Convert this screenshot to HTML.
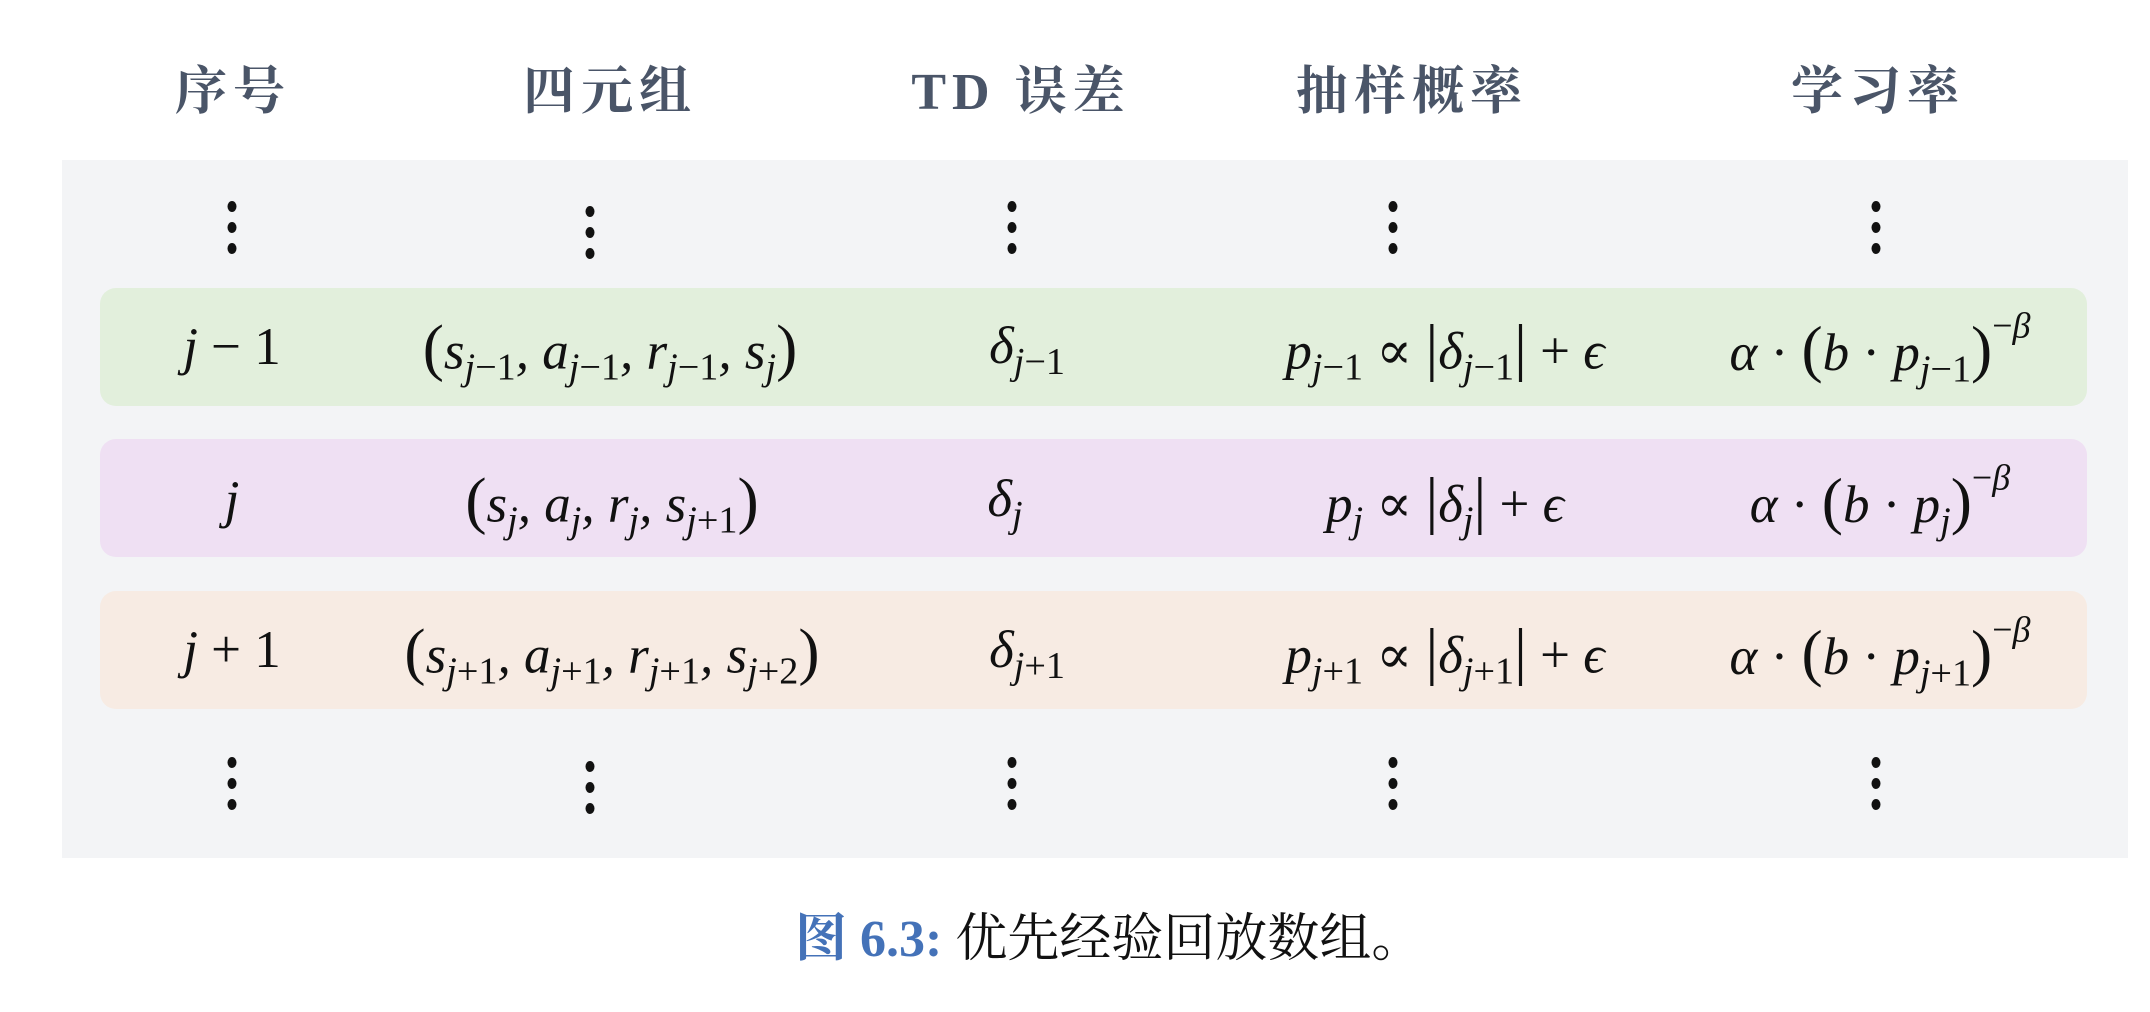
<!DOCTYPE html>
<html><head><meta charset="utf-8">
<style>
html,body{margin:0;padding:0;background:#fff;}
body{width:2150px;height:1012px;position:relative;overflow:hidden;}
.h{position:absolute;top:58px;transform:translateX(-50%);font-family:"Liberation Serif","Noto Serif CJK SC",serif;font-weight:bold;font-size:52px;color:#4a5568;white-space:nowrap;letter-spacing:6px;line-height:70px;}
.panel{position:absolute;left:62px;top:160px;width:2066px;height:698px;background:#f3f4f6;}
.row{position:absolute;left:100px;width:1987px;height:118px;border-radius:16px;}
.c{position:absolute;transform:translate(-50%,-50%);font-family:"Liberation Serif","DejaVu Serif",serif;font-style:italic;font-size:53px;color:#111;white-space:nowrap;}
.c sub{font-size:0.72em;vertical-align:-0.3em;}
.c sup{font-size:0.68em;vertical-align:0.9em;}
.n{font-style:normal;}
.p{font-style:normal;font-size:1.2em;font-weight:300;}
.dots{position:absolute;width:9px;height:52px;transform:translate(-50%,-50%);}
.dots i{display:block;width:9px;height:11px;border-radius:50%;background:#111;margin-bottom:10px;}
.cap{position:absolute;left:795px;top:905px;font-family:"Liberation Serif","Noto Serif CJK SC",serif;font-size:52px;color:#111;white-space:nowrap;line-height:70px;}
.cap b{color:#4472b8;font-family:"Liberation Serif","Noto Serif CJK SC",serif;}
</style></head><body>
<div class="h" style="left:233px">序号</div>
<div class="h" style="left:610px">四元组</div>
<div class="h" style="left:1021px">TD 误差</div>
<div class="h" style="left:1412px">抽样概率</div>
<div class="h" style="left:1878px">学习率</div>

<div class="panel"></div>
<div class="row" style="top:288px;background:#e2efdc"></div>
<div class="row" style="top:439px;background:#efe0f3"></div>
<div class="row" style="top:591px;background:#f7ebe3"></div>

<div class="dots" style="left:232px;top:227px"><i></i><i></i><i></i></div>
<div class="dots" style="left:590px;top:232px"><i></i><i></i><i></i></div>
<div class="dots" style="left:1012px;top:227px"><i></i><i></i><i></i></div>
<div class="dots" style="left:1393px;top:227px"><i></i><i></i><i></i></div>
<div class="dots" style="left:1876px;top:227px"><i></i><i></i><i></i></div>
<div class="dots" style="left:232px;top:783px"><i></i><i></i><i></i></div>
<div class="dots" style="left:590px;top:787px"><i></i><i></i><i></i></div>
<div class="dots" style="left:1012px;top:783px"><i></i><i></i><i></i></div>
<div class="dots" style="left:1393px;top:783px"><i></i><i></i><i></i></div>
<div class="dots" style="left:1876px;top:783px"><i></i><i></i><i></i></div>

<!-- row 1 -->
<div class="c" style="left:232px;top:347px">j <span class="n">− 1</span></div>
<div class="c" style="left:610px;top:350px"><span class="p">(</span>s<sub>j<span class="n">−1</span></sub>, a<sub>j<span class="n">−1</span></sub>, r<sub>j<span class="n">−1</span></sub>, s<sub>j</sub><span class="p">)</span></div>
<div class="c" style="left:1027px;top:350px">δ<sub>j<span class="n">−1</span></sub></div>
<div class="c" style="left:1445px;top:350px">p<sub>j<span class="n">−1</span></sub> <span class="n">∝</span> <span class="p">|</span>δ<sub>j<span class="n">−1</span></sub><span class="p">|</span> <span class="n">+</span> ϵ</div>
<div class="c" style="left:1880px;top:348px">α <span class="n">·</span> <span class="p">(</span>b <span class="n">·</span> p<sub>j<span class="n">−1</span></sub><span class="p">)</span><sup><span class="n">−</span>β</sup></div>

<!-- row 2 -->
<div class="c" style="left:232px;top:500px">j</div>
<div class="c" style="left:612px;top:503px"><span class="p">(</span>s<sub>j</sub>, a<sub>j</sub>, r<sub>j</sub>, s<sub>j<span class="n">+1</span></sub><span class="p">)</span></div>
<div class="c" style="left:1005px;top:503px">δ<sub>j</sub></div>
<div class="c" style="left:1445px;top:503px">p<sub>j</sub> <span class="n">∝</span> <span class="p">|</span>δ<sub>j</sub><span class="p">|</span> <span class="n">+</span> ϵ</div>
<div class="c" style="left:1880px;top:500px">α <span class="n">·</span> <span class="p">(</span>b <span class="n">·</span> p<sub>j</sub><span class="p">)</span><sup><span class="n">−</span>β</sup></div>

<!-- row 3 -->
<div class="c" style="left:232px;top:650px">j <span class="n">+ 1</span></div>
<div class="c" style="left:612px;top:654px"><span class="p">(</span>s<sub>j<span class="n">+1</span></sub>, a<sub>j<span class="n">+1</span></sub>, r<sub>j<span class="n">+1</span></sub>, s<sub>j<span class="n">+2</span></sub><span class="p">)</span></div>
<div class="c" style="left:1027px;top:654px">δ<sub>j<span class="n">+1</span></sub></div>
<div class="c" style="left:1445px;top:654px">p<sub>j<span class="n">+1</span></sub> <span class="n">∝</span> <span class="p">|</span>δ<sub>j<span class="n">+1</span></sub><span class="p">|</span> <span class="n">+</span> ϵ</div>
<div class="c" style="left:1880px;top:652px">α <span class="n">·</span> <span class="p">(</span>b <span class="n">·</span> p<sub>j<span class="n">+1</span></sub><span class="p">)</span><sup><span class="n">−</span>β</sup></div>

<div class="cap"><b>图 6.3:</b> 优先经验回放数组。</div>
</body></html>
